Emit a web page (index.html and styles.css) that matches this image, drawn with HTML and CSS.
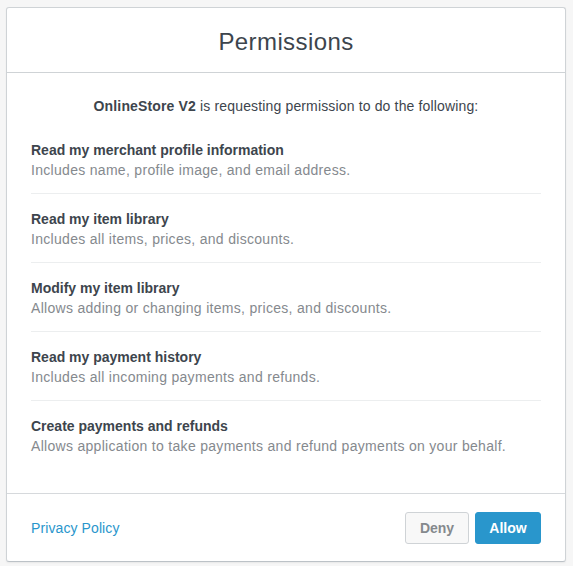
FILE: index.html
```html
<!DOCTYPE html>
<html>
<head>
<meta charset="utf-8">
<link rel="stylesheet" href="styles.css">
</head>
<body>
<div class="card">
  <div class="header"><h1 class="title">Permissions</h1></div>
  <div class="content">
    <p class="intro"><strong>OnlineStore V2</strong> is requesting permission to do the following:</p>
    <ul class="perms">
      <li class="perm"><div class="perm-title">Read my merchant profile information</div><div class="perm-desc">Includes name, profile image, and email address.</div></li>
      <li class="perm"><div class="perm-title">Read my item library</div><div class="perm-desc">Includes all items, prices, and discounts.</div></li>
      <li class="perm"><div class="perm-title">Modify my item library</div><div class="perm-desc">Allows adding or changing items, prices, and discounts.</div></li>
      <li class="perm"><div class="perm-title">Read my payment history</div><div class="perm-desc">Includes all incoming payments and refunds.</div></li>
      <li class="perm"><div class="perm-title">Create payments and refunds</div><div class="perm-desc">Allows application to take payments and refund payments on your behalf.</div></li>
    </ul>
  </div>
  <div class="footer">
    <a class="link" href="#">Privacy Policy</a>
    <div class="actions">
      <button class="btn btn-deny">Deny</button>
      <button class="btn btn-allow">Allow</button>
    </div>
  </div>
</div>
</body>
</html>
```
FILE: styles.css
```css
html, body { margin: 0; padding: 0; }
body {
  background: #f6f6f6;
  font-family: "Liberation Sans", Arial, sans-serif;
  color: #3d454d;
  padding: 7px 7px 4px 6px;
}
.card {
  background: #fff;
  border: 1px solid #cfd3d6;
  border-bottom-color: #bcc2c7;
  border-radius: 3px;
  box-shadow: 0 1px 2px rgba(0,0,0,0.06);
  height: 553px;
  display: flex;
  flex-direction: column;
}
.header {
  height: 64px;
  border-bottom: 1px solid #cfd3d6;
  display: flex;
  align-items: center;
  justify-content: center;
}
.title {
  margin: 0;
  font-weight: normal;
  font-size: 24px;
  letter-spacing: 0.4px;
  color: #3d454d;
  padding-top: 4px;
}
.content {
  flex: 1;
  padding: 0 24px;
}
.intro {
  text-align: center;
  font-size: 14px;
  line-height: 20px;
  letter-spacing: 0.15px;
  margin: 23px 0 9px;
  color: #3d454d;
}
.intro strong { font-weight: bold; }
.perms { list-style: none; margin: 0; padding: 0; }
.perm {
  padding: 15px 0 13px;
  border-bottom: 1px solid #eceeef;
}
.perm:last-child { border-bottom: none; }
.perm-title {
  font-weight: bold;
  font-size: 14px;
  line-height: 20px;
  color: #3d454d;
}
.perm-desc {
  font-size: 14px;
  line-height: 20px;
  letter-spacing: 0.3px;
  color: #85898e;
}
.footer {
  height: 67px;
  border-top: 1px solid #d6d9dc;
  padding: 0 24px;
  display: flex;
  align-items: center;
  justify-content: space-between;
}
.link {
  color: #2996cc;
  text-decoration: none;
  font-size: 14px;
  letter-spacing: 0.1px;
  margin-top: 1px;
}
.actions { display: flex; gap: 6px; margin-top: 1px; }
.btn {
  font-family: inherit;
  font-size: 14px;
  font-weight: bold;
  height: 32px;
  border-radius: 3px;
  padding: 0;
  cursor: pointer;
}
.btn-deny {
  background: #f8f8f8;
  border: 1px solid #cfd3d6;
  color: #85898d;
  width: 64px;
}
.btn-allow {
  background: #2996cc;
  border: 1px solid #2996cc;
  color: #fff;
  width: 66px;
}
```
